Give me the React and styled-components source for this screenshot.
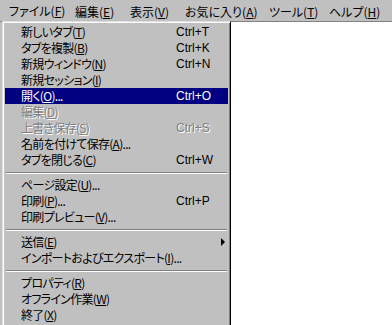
import React from "react";
import styled, { createGlobalStyle } from "styled-components";

const Global = createGlobalStyle`
  html, body { margin: 0; padding: 0; background: #ffffff; }
  body {
    font-family: "Noto Sans CJK JP", "Liberation Sans", sans-serif;
    font-size: 12px;
    color: #000;
    font-feature-settings: "palt";
  }
`;

const Win = styled.div`
  position: relative;
  width: 392px;
  height: 325px;
  overflow: hidden;
  display: flex;
  flex-direction: column;
  background: #ffffff;
`;

const MenuBar = styled.div`
  display: flex;
  align-items: center;
  height: 22px;
  box-sizing: border-box;
  padding: 2px 3px 1px 3px;
  background: #c0c0c0;
  border-bottom: 1px solid #808080;
`;

const BarItem = styled.div`
  width: ${(p) => p.$w}px;
  height: 18px;
  line-height: 17px;
  box-sizing: border-box;
  padding-left: 6px;
  border: 1px solid ${(p) => (p.$pressed ? "#808080 #ffffff #ffffff #808080" : "transparent")};
  white-space: nowrap;
`;

const Content = styled.div`
  flex: 1;
  background: #ffffff;
  border-left: 2px solid #c0c0c0;
`;

const Menu = styled.div`
  position: absolute;
  left: 2px;
  top: 21px;
  width: 229px;
  box-sizing: border-box;
  background: #c0c0c0;
  border-top: 1px solid #dfdfdf;
  border-left: 1px solid #dfdfdf;
  border-right: 1px solid #000000;
  border-bottom: 1px solid #000000;
  box-shadow: inset 1px 1px 0 #ffffff, inset -1px -1px 0 #808080;
  padding: 2px 2px 3px 2px;
`;

const Row = styled.div`
  display: grid;
  grid-template-columns: 155px 1fr;
  align-items: center;
  height: 16px;
  line-height: 16px;
  padding-left: 16px;
  white-space: nowrap;
  letter-spacing: -0.7px;
  background: ${(p) => (p.$active ? "#000080" : "transparent")};
  color: ${(p) => (p.$active ? "#ffffff" : p.$disabled ? "#808080" : "#000000")};
  text-shadow: ${(p) => (p.$disabled ? "1px 1px 0 #ffffff" : "none")};
`;

const Shortcut = styled.span`
  display: flex;
  align-items: center;
  letter-spacing: 0;
  font-family: "Liberation Sans", "Noto Sans CJK JP", sans-serif;
`;

const Arrow = styled.span`
  margin-left: auto;
  margin-right: 3px;
  width: 0;
  height: 0;
  border-top: 4px solid transparent;
  border-bottom: 4px solid transparent;
  border-left: 4px solid #000000;
`;

const Sep = styled.div`
  height: 9px;
  box-sizing: border-box;
  padding-top: 4px;
  margin: 0 1px;
  &::before {
    content: "";
    display: block;
    height: 0;
    border-top: 1px solid #808080;
    border-bottom: 1px solid #ffffff;
  }
`;

const U = styled.span`
  text-decoration: underline;
`;

const Label = ({ t, k, dots }) => (
  <span>
    {t}(<U>{k}</U>){dots ? "..." : ""}
  </span>
);

const groups = [
  [
    { t: "新しいタブ", k: "T", s: "Ctrl+T" },
    { t: "タブを複製", k: "B", s: "Ctrl+K" },
    { t: "新規ウィンドウ", k: "N", s: "Ctrl+N" },
    { t: "新規セッション", k: "I" },
    { t: "開く", k: "O", s: "Ctrl+O", dots: true, active: true },
    { t: "編集", k: "D", disabled: true },
    { t: "上書き保存", k: "S", s: "Ctrl+S", disabled: true },
    { t: "名前を付けて保存", k: "A", dots: true },
    { t: "タブを閉じる", k: "C", s: "Ctrl+W" },
  ],
  [
    { t: "ページ設定", k: "U", dots: true },
    { t: "印刷", k: "P", s: "Ctrl+P", dots: true },
    { t: "印刷プレビュー", k: "V", dots: true },
  ],
  [
    { t: "送信", k: "E", sub: true },
    { t: "インポートおよびエクスポート", k: "I", dots: true },
  ],
  [
    { t: "プロパティ", k: "R" },
    { t: "オフライン作業", k: "W" },
    { t: "終了", k: "X" },
  ],
];

const bar = [
  { t: "ファイル", k: "F", pressed: true, w: 65 },
  { t: "編集", k: "E", w: 55 },
  { t: "表示", k: "V", w: 55 },
  { t: "お気に入り", k: "A", w: 84 },
  { t: "ツール", k: "T", w: 60 },
  { t: "ヘルプ", k: "H", w: 60 },
];

export default function App() {
  return (
    <Win>
      <Global />
      <MenuBar>
        {bar.map((b) => (
          <BarItem key={b.t} $pressed={b.pressed} $w={b.w}>
            <Label t={b.t} k={b.k} />
          </BarItem>
        ))}
      </MenuBar>
      <Content />
      <Menu>
        {groups.map((g, gi) => (
          <React.Fragment key={gi}>
            {gi > 0 && <Sep />}
            {g.map((it) => (
              <Row key={it.t} $active={it.active} $disabled={it.disabled}>
                <Label t={it.t} k={it.k} dots={it.dots} />
                <Shortcut>
                  {it.s || ""}
                  {it.sub && <Arrow />}
                </Shortcut>
              </Row>
            ))}
          </React.Fragment>
        ))}
      </Menu>
    </Win>
  );
}
